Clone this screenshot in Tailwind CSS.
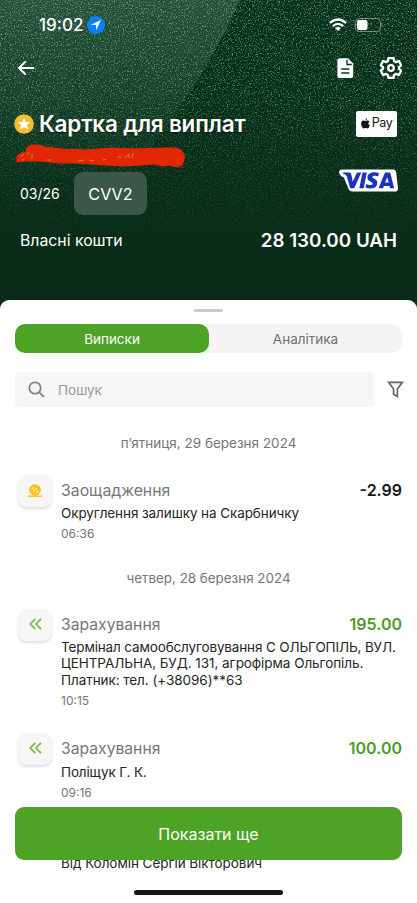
<!DOCTYPE html>
<html lang="uk">
<head>
<meta charset="utf-8">
<meta name="viewport" content="width=device-width, initial-scale=1">
<title>Картка для виплат</title>
<script src="https://cdn.jsdelivr.net/npm/@tailwindcss/browser@4"></script>
</head>
<body class="bg-[#0b2a19]">
<div class="relative flex h-[903px] w-[417px] flex-col overflow-hidden bg-[#0b2a19] font-['Inter','Liberation_Sans',sans-serif] text-[#262626]">
  <!-- sparkling card backdrop -->
  <svg class="absolute left-0 top-0" width="417" height="310" viewBox="0 0 417 310">
    <defs>
      <filter id="sparkle" x="0" y="0" width="100%" height="100%" color-interpolation-filters="sRGB">
        <feTurbulence type="fractalNoise" baseFrequency="0.77 0.73" numOctaves="4" seed="31"/>
        <feColorMatrix type="matrix" values="0 0 0 0 0.58  0 0 0 0 0.8  0 0 0 0 0.68  2.4 2.4 2.4 0 -3.65"/>
      </filter>
      <linearGradient id="fade" x1="0" y1="0" x2="0" y2="1">
        <stop offset="0" stop-color="#fff"/><stop offset=".3" stop-color="#fff" stop-opacity=".85"/><stop offset=".55" stop-color="#fff" stop-opacity=".35"/><stop offset=".8" stop-color="#fff" stop-opacity="0"/>
      </linearGradient>
      <linearGradient id="glow" x1="0" y1="0" x2="0" y2="1">
        <stop offset="0" stop-color="#2b5840" stop-opacity=".85"/><stop offset=".5" stop-color="#1f4a34" stop-opacity=".6"/><stop offset="1" stop-color="#12402a" stop-opacity="0"/>
      </linearGradient>
      <linearGradient id="base" x1="0" y1="0" x2="0" y2="1">
        <stop offset="0" stop-color="#053019"/><stop offset="1" stop-color="#0a2b19"/>
      </linearGradient>
      <mask id="fadeMask"><rect width="417" height="310" fill="url(#fade)"/></mask>
    </defs>
    <rect width="417" height="310" fill="url(#base)"/>
    <path d="M0 0H240Q216 55 178 110Q150 150 115 200H0Z" fill="url(#glow)"/>
    <g mask="url(#fadeMask)"><rect width="417" height="310" filter="url(#sparkle)" opacity=".6"/></g>
  </svg>

  <header class="relative h-[300px] shrink-0 text-white">
    <div class="flex h-[50px] items-center justify-between pl-[39px] pr-[34px]">
      <div class="flex items-center gap-[4px]">
        <span class="text-[17px] font-medium leading-5">19:02</span>
        <svg width="18" height="18" viewBox="0 0 18 18"><circle cx="9" cy="9" r="9" fill="#0b7fff"/><path d="M14 4L3.8 8.8L9 9L9.2 14.2Z" fill="#fff"/></svg>
      </div>
      <div class="flex items-center gap-[8px]">
        <svg width="18" height="14" viewBox="0 0 18 14" fill="none" stroke="#fff" stroke-width="2.2"><path d="M.8 5Q9-2 17.2 5M3.7 8.1Q9 3.5 14.3 8.1"/><path d="M9 13L6 10Q9 7.8 12 10Z" fill="#fff" stroke="none"/></svg>
        <svg width="28" height="14" viewBox="0 0 28 14"><rect x=".5" y=".5" width="25" height="13" rx="3.7" fill="none" stroke="#778b80"/><rect x="2" y="2" width="10.5" height="10" rx="2" fill="#fff"/><path d="M27 5V9" stroke="#778b80"/></svg>
      </div>
    </div>
    <div class="flex h-[35px] items-center justify-between pl-[18px] pr-[15px]">
      <svg width="17" height="14" viewBox="0 0 17 14" fill="none" stroke="#fff" stroke-width="1.9" stroke-linecap="round" stroke-linejoin="round"><path d="M7 1L1 7L7 13M1.3 7H15.5"/></svg>
      <div class="flex items-center gap-[26px]">
        <svg width="17" height="20" viewBox="0 0 17 20"><path d="M2.2.2H11L16.2 5.5V18Q16.2 20 14.2 20H2.2Q.4 20 .4 18V2Q.4.2 2.2.2Z" fill="#fff"/><path d="M10 1.7V6.5H14.8" fill="none" stroke="#0b3320" stroke-width="1.4"/><path d="M4.2 11H12.4M4.2 15H12.4" stroke="#0b3320" stroke-width="1.7"/></svg>
        <svg width="22" height="22" viewBox="1 1 22 22" fill="none" stroke="#fff" stroke-width="2.3" stroke-linejoin="round"><path d="M9.5 2H14.5L15.1 5L17 6.1L19.9 5L22.3 9.3L20 11.2V12.8L22.3 14.7L19.9 19L17 17.9L15.1 19L14.5 22H9.5L8.9 19L7 17.9L4.1 19L1.7 14.7L4 12.8V11.2L1.7 9.3L4.1 5L7 6.1L8.9 5Z"/><circle cx="12" cy="12" r="2.8"/></svg>
      </div>
    </div>
    <div class="mt-[22px] flex h-[33px] items-center justify-between pl-[14px] pr-[20px]">
      <div class="flex items-center gap-[5px]">
        <svg width="20" height="20" viewBox="0 0 20 20"><circle cx="10" cy="10" r="9.8" fill="#f4bd32"/><path d="M10 3.8L11.8 7.9L16.2 8.2L12.9 11.1L13.9 15.5L10 13.1L6.1 15.5L7.1 11.1L3.8 8.2L8.2 7.9Z" fill="#fff"/></svg>
        <h1 class="whitespace-nowrap text-[22.5px] font-semibold leading-7 tracking-[-0.2px] [text-shadow:0_1px_2px_rgba(0,0,0,0.6)]">Картка для виплат</h1>
      </div>
      <div class="flex h-[26px] w-[41px] items-center justify-center gap-[2px] rounded-[2px] bg-white pb-[1px] text-[#151515]">
        <svg width="9" height="11" viewBox="0 0 9 11" fill="#151515"><path d="M6.2.1Q6.3 2 4.4 2.5Q4.3.8 6.2.1Z"/><path d="M4.5 3C5.2 3 5.7 2.5 6.6 2.5Q7.8 2.5 8.5 3.5C6.8 4.5 7.1 6.8 8.8 7.5C8.3 9 7.4 10.4 6.4 10.4C5.7 10.4 5.4 10 4.6 10C3.8 10 3.4 10.4 2.8 10.4C1.4 10.4.1 7.9.1 5.8C.1 3.8 1.3 2.6 2.6 2.6C3.4 2.6 4 3 4.5 3Z"/></svg>
        <span class="text-[12.5px] leading-4 tracking-[-0.5px]">Pay</span>
      </div>
    </div>
    <div class="flex h-[75px] justify-between pl-[15px] pr-[19px]">
      <div class="flex flex-col">
        <svg class="mt-[3px]" width="171" height="26" viewBox="0 0 171 26"><path d="M2 13L6 10L11 9L12 5L16 2L24 2L30 4L46 6L70 7L96 5L121 6L147 5L160 5L166 7L169 11V17L167 22L162 24L154 22L148 23L139 21L127 22L106 23L91 22L75 21L60 20L44 20L25 18L10 18L2 19Z" fill="#e32703" stroke="#e32703" stroke-linejoin="round" /><path d="M6 14L9 11M9 17H7M12 11L14 10M17 11V16M32 17L36 17M63 18L69 17M74 17L79 18M88 17L91 16M102 14H106M110 15L114 11V15M117 15L118 10" fill="none" stroke="#d98268" stroke-width=".9"/></svg>
        <div class="mt-[3px] flex items-center pl-[5px]">
          <span class="w-[54px] text-[14px] leading-5">03/26</span>
          <span class="flex h-[43px] w-[73px] items-center justify-center rounded-[9px] bg-[#3a5747] text-[16.2px] leading-5">CVV2</span>
        </div>
      </div>
      <svg class="mt-[28px]" width="59" height="25" viewBox="0 0 61 26" preserveAspectRatio="none"><path d="M3 1.5H56Q58.5 1.5 59 4L61 21Q61 24.5 58 24.5H14Q11 24.5 10 22L5 10Q0 8 0 4Q.5 1.5 3 1.5Z" fill="#fff"/><path d="M3.8 4.8H11Q12.4 5 12.8 7L14.2 14.2L18.6 4.8H23L15.8 21H11.6L8 8.5Q6.5 6 3.8 5.5ZM24.3 4.8H28.8L25.5 21H21ZM41.3 5.3L40.5 8.9C38.2 7.8 34.6 7.8 34.5 9.4C34.4 11.2 39.6 11.2 39.6 15.3C39.6 21.8 32 22 27.3 20.3L28.1 16.6C30.4 17.9 34.8 18.3 34.8 16.3C34.8 14.4 29.3 14.2 29.4 10C29.6 4.4 36.6 3.6 41.3 5.3ZM48.6 4.8H53L57 21H52.7L52.2 18.6H46.5L45.4 21H40.8L47.1 5.8Q47.5 4.8 48.6 4.8ZM49.9 9.4L47.7 15.2H51.4Z" fill="#1b35b8" fill-rule="evenodd"/></svg>
    </div>
    <div class="mt-[11px] flex h-[29px] items-center justify-between pl-[20px] pr-[20px]">
      <span class="text-[15.8px] leading-5">Власні кошти</span>
      <span class="text-[18.8px] font-semibold leading-6">28 130.00 UAH</span>
    </div>
  </header>

  <main class="relative flex min-h-0 flex-1 flex-col rounded-t-[9px] bg-white">
    <div class="mx-auto mt-[9px] h-[3px] w-[29px] shrink-0 rounded-full bg-[#cbcbcb]"></div>
    <div class="mx-[15px] mt-[12px] flex h-[29px] shrink-0 rounded-[10px] bg-[#f4f4f4] text-[13.5px] leading-[30px]">
      <div class="w-[194px] rounded-[10px] bg-[#4da325] text-center text-white">Виписки</div>
      <div class="flex-1 text-center text-[#707070]">Аналітика</div>
    </div>
    <div class="mt-[19px] flex h-[35px] shrink-0 items-center pl-[15px] pr-[13px]">
      <div class="flex h-[35px] w-[359px] items-center rounded-[3px] bg-[#f6f6f6] pl-[13px]">
        <svg width="17" height="17" viewBox="0 0 17 17" fill="none" stroke="#858585" stroke-width="1.8"><circle cx="7" cy="7" r="5.7"/><path d="M11.3 11.3L16 16"/></svg>
        <span class="ml-[13px] text-[13.5px] leading-5 text-[#999]">Пошук</span>
      </div>
      <svg class="ml-[13px]" width="17" height="17" viewBox="0 0 17 17" fill="none" stroke="#666" stroke-width="1.7"><path d="M1.6 1.3H15.4L10.4 8V15.5L6.6 13.2V8Z"/></svg>
    </div>
    <h2 class="mt-[26px] text-center text-[13.5px] leading-5 text-[#757575]">п’ятниця, 29 березня 2024</h2>

    <article class="mt-[22px] flex h-[83px] shrink-0 pl-[18px] pr-[15px]">
      <div class="flex h-[32px] w-[34px] shrink-0 items-center justify-center rounded-[9px] bg-[#f6f6f7] shadow-[0_2px_3px_rgba(0,0,0,0.13)]">
        <svg class="-mt-[2px]" width="14" height="13" viewBox="0 0 14 13"><circle cx="7" cy="6" r="5.8" fill="#f8c316"/><path d="M0 12.2H14" stroke="#f8c316" stroke-width="1.4"/><path d="M5 8L9 4" stroke="#fff"/><circle cx="5" cy="4.6" r=".9" fill="none" stroke="#fff" stroke-width=".7"/><circle cx="9" cy="7.6" r=".9" fill="none" stroke="#fff" stroke-width=".7"/></svg>
      </div>
      <div class="ml-[9px] flex-1">
        <div class="mt-[5px] flex h-5 items-center justify-between"><span class="pt-px text-[15.8px] text-[#777]">Заощадження</span><span class="text-[16px] font-semibold text-[#171717]">-2.99</span></div>
        <p class="mt-[5px] whitespace-nowrap text-[13.5px] leading-[16px] tracking-[-0.09px]">Округлення залишку на Скарбничку</p>
        <p class="mt-[5px] text-[12px] leading-[16px] text-[#757575]">06:36</p>
      </div>
    </article>
    <h2 class="mt-[10px] text-center text-[13.4px] leading-5 text-[#757575]">четвер, 28 березня 2024</h2>

    <article class="mt-[21px] flex h-[124px] shrink-0 pl-[18px] pr-[15px]">
      <div class="flex h-[32px] w-[34px] shrink-0 items-center justify-center rounded-[9px] bg-[#f6f6f7] shadow-[0_2px_3px_rgba(0,0,0,0.13)]">
        <svg class="-mt-[2px]" width="13" height="12" viewBox="0 0 13 12" fill="none" stroke="#7dba48" stroke-width="1.8"><path d="M6.3 .8L1.3 6L6.3 11.2M12 .8L7 6L12 11.2"/></svg>
      </div>
      <div class="ml-[9px] flex-1">
        <div class="mt-[5px] flex h-5 items-center justify-between"><span class="pt-px text-[15.7px] text-[#777]">Зарахування</span><span class="text-[16px] font-semibold text-[#4b9b2b]">195.00</span></div>
        <p class="mt-[5px] whitespace-nowrap text-[13.5px] leading-[16.3px] tracking-[-0.14px]">Термінал самообслуговування С ОЛЬГОПІЛЬ, ВУЛ.<br><span class="tracking-[-0.06px]">ЦЕНТРАЛЬНА, БУД. 131, агрофірма Ольгопіль.<br>Платник: тел. (+38096)**63</span></p>
        <p class="mt-[5px] text-[12px] leading-[16px] text-[#757575]">10:15</p>
      </div>
    </article>

    <article class="flex h-[91px] shrink-0 pl-[18px] pr-[15px]">
      <div class="flex h-[32px] w-[34px] shrink-0 items-center justify-center rounded-[9px] bg-[#f6f6f7] shadow-[0_2px_3px_rgba(0,0,0,0.13)]">
        <svg class="-mt-[2px]" width="13" height="12" viewBox="0 0 13 12" fill="none" stroke="#7dba48" stroke-width="1.8"><path d="M6.3 .8L1.3 6L6.3 11.2M12 .8L7 6L12 11.2"/></svg>
      </div>
      <div class="ml-[9px] flex-1">
        <div class="mt-[5px] flex h-5 items-center justify-between"><span class="pt-px text-[15.7px] text-[#777]">Зарахування</span><span class="text-[16px] font-semibold text-[#4b9b2b]">100.00</span></div>
        <p class="mt-[6px] whitespace-nowrap text-[13.5px] leading-[16px] tracking-[-0.14px]">Поліщук Г. К.</p>
        <p class="mt-[5px] text-[12px] leading-[16px] text-[#757575]">09:16</p>
      </div>
    </article>
    <article class="mt-[31px] pl-[61px]">
      <p class="whitespace-nowrap text-[13.5px] leading-[16px] tracking-[-0.06px]">Від Коломін Сергій Вікторович</p>
    </article>
  </main>

  <button class="absolute bottom-[43px] left-[15px] right-[15px] h-[53px] rounded-[9px] bg-[#4da325] text-[16px] text-white">Показати ще</button>
  <div class="absolute bottom-[8px] left-[134px] h-[5px] w-[149px] rounded-full bg-[#161616]"></div>
</div>
</body>
</html>
